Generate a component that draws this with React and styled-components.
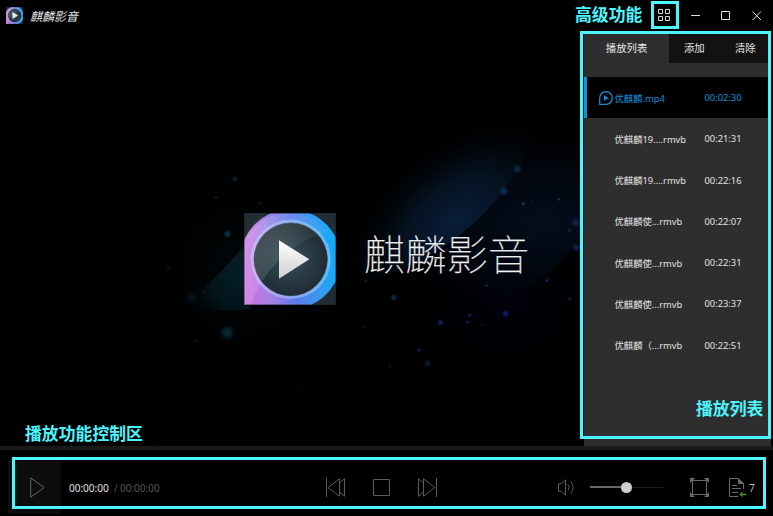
import React from "react";
import styled, { createGlobalStyle } from "styled-components";

const CYAN = "#4df5ff";
const BLUE = "#1790dc";

const GlobalStyle = createGlobalStyle`
  * { box-sizing: border-box; }
  body { margin: 0; background: #000; }
`;

const Window = styled.div`
  position: relative;
  width: 773px;
  height: 516px;
  overflow: hidden;
  display: flex;
  flex-direction: column;
  background: #000;
  color: #e6e6e6;
  font-family: "Noto Sans", "Noto Sans CJK SC", sans-serif;
`;

const TitleBar = styled.header`
  display: flex;
  align-items: center;
  height: 32px;
  flex: none;
  padding: 0 11px 1px 6px;
`;

const AppName = styled.h1`
  margin: 2px auto 0 7px;
  font-size: 12px;
  line-height: 16px;
  font-weight: 400;
  font-style: italic;
`;

const WindowButtons = styled.div`
  display: flex;
  align-items: center;
  gap: 20px;
`;

const IconButton = styled.button`
  display: flex;
  flex: none;
  padding: 0;
  border: 0;
  background: none;
  color: ${(p) => p.$color || "#dcdcdc"};
`;

const Body = styled.main`
  display: flex;
  height: 414px;
  flex: none;
`;

const Stage = styled.section`
  display: grid;
  width: 584px;
  & > * { grid-area: 1 / 1; }
`;

const Brand = styled.div`
  display: flex;
  align-items: flex-start;
  gap: 28px;
  padding: 181px 0 0 244px;
`;

const BrandName = styled.div`
  margin-top: 9px;
  font-family: "Noto Sans CJK SC", sans-serif;
  font-weight: 100;
  font-size: 41.3px;
  line-height: 60px;
  color: #f2f2f2;
  -webkit-text-stroke: 0.25px #d8d8d8;
  white-space: nowrap;
`;

const Sidebar = styled.aside`
  width: 187px;
  background: #2e2e2e;
`;

const Tabs = styled.nav`
  display: flex;
  height: 31px;
  margin-bottom: 14px;
  background: #121212;
`;

const Tab = styled.button`
  width: ${(p) => p.$width}px;
  padding: 1px 0 0;
  border: 0;
  background: ${(p) => (p.$active ? "#2e2e2e" : "transparent")};
  color: #e6e6e6;
  font-family: inherit;
  font-size: 10.4px;
  line-height: 14px;
`;

const Playlist = styled.ul`
  margin: 0;
  padding: 0;
  list-style: none;
`;

const Track = styled.li`
  display: grid;
  grid-template-columns: 16px 90px 1fr;
  align-items: center;
  height: 41.25px;
  padding: 1px 0 0 ${(p) => (p.$active ? 11.5 : 14.5)}px;
  border-left: ${(p) => (p.$active ? `3px solid ${BLUE}` : "0")};
  background: ${(p) => (p.$active ? "#000" : "transparent")};
  color: ${(p) => (p.$active ? BLUE : "#e2e2e2")};
  font-size: 9.33px;
  line-height: 14px;
  white-space: nowrap;
`;

const TrackName = styled.span`
  grid-column: 2;
  padding-top: 1px;
`;

const Divider = styled.div`
  height: 4px;
  flex: none;
  background: #191919;
`;

const Controls = styled.footer`
  display: flex;
  align-items: center;
  height: 66px;
  padding: 9px 0 0 8px;
`;

const PlayButton = styled(IconButton)`
  width: 53px;
  height: 53px;
  align-items: center;
  justify-content: center;
  background: #0d0d0d;
  padding-left: 5px;
  color: #666;
`;

const Time = styled.div`
  display: flex;
  width: 103px;
  margin-left: 8px;
  font-size: 10px;
  line-height: 14px;
  color: #555;
`;

const Elapsed = styled.span`
  width: 45px;
  color: #e2e2e2;
`;

const Slash = styled.span`
  width: 6px;
`;

const Transport = styled.div`
  display: flex;
  gap: 26px;
  margin-left: 153px;
`;

const Volume = styled.div`
  display: flex;
  align-items: center;
  gap: 15px;
  margin-left: 121px;
`;

const Slider = styled.div`
  display: flex;
  align-items: center;
  width: 73px;
  height: 20px;
  margin-top: -1px;
`;

const Rail = styled.div`
  flex: ${(p) => (p.$filled ? "0 0 31px" : "1")};
  height: ${(p) => (p.$filled ? 2 : 1)}px;
  background: ${(p) => (p.$filled ? "#686868" : "#1d1d1d")};
`;

const Knob = styled.div`
  width: 11px;
  height: 11px;
  border-radius: 50%;
  background: #cfcfcf;
`;

const Tools = styled.div`
  display: flex;
  align-items: center;
  gap: 19px;
  margin-left: 27px;
`;

const Count = styled.span`
  margin-left: -17px;
  font-size: 10px;
  line-height: 14px;
  color: #bbb;
`;

const Callout = styled.div`
  position: absolute;
  left: ${(p) => p.$x}px;
  top: ${(p) => p.$y}px;
  width: ${(p) => p.$w}px;
  height: ${(p) => p.$h}px;
  border: 3px solid ${CYAN};
  pointer-events: none;
`;

const CalloutLabel = styled.div`
  position: absolute;
  left: ${(p) => p.$x}px;
  top: ${(p) => p.$y}px;
  font-family: "Noto Sans CJK SC", sans-serif;
  font-size: 16.85px;
  line-height: 20px;
  font-weight: 700;
  color: ${CYAN};
  white-space: nowrap;
`;

const Svg = styled.svg`
  display: block;
  overflow: visible;
`;

const Line = ({ w, h, children, sw = 1 }) => (
  <Svg width={w} height={h} viewBox={`0 0 ${w} ${h}`} fill="none" stroke="currentColor" strokeWidth={sw}>
    {children}
  </Svg>
);

function Logo({ id, size }) {
  return (
    <Svg width={size} height={size} viewBox="0 0 276 278" preserveAspectRatio="none">
      <defs>
        <linearGradient id={`${id}-ring`} x1="0" y1="0.55" x2="1" y2="0.45">
          <stop offset="0" stopColor="#cf72e0" />
          <stop offset="0.25" stopColor="#a381e6" />
          <stop offset="0.5" stopColor="#5c7bea" />
          <stop offset="0.75" stopColor="#389af2" />
          <stop offset="1" stopColor="#08aff9" />
        </linearGradient>
        <radialGradient id={`${id}-disc`}>
          <stop offset="0" stopColor="#344e59" />
          <stop offset="1" stopColor="#202c33" />
        </radialGradient>
        <linearGradient id={`${id}-tri`} x1="0" y1="0" x2="0" y2="1">
          <stop offset="0" stopColor="#fff" />
          <stop offset="1" stopColor="#d0d0d0" />
        </linearGradient>
        <clipPath id={`${id}-clip`}>
          <rect width="276" height="278" />
        </clipPath>
        <linearGradient id={`${id}-shine`} x1="0" y1="0" x2="1" y2="0.4">
          <stop offset="0" stopColor="#fff" stopOpacity="0.24" />
          <stop offset="0.7" stopColor="#fff" stopOpacity="0.06" />
          <stop offset="1" stopColor="#fff" stopOpacity="0.02" />
        </linearGradient>
      </defs>
      <g clipPath={`url(#${id}-clip)`}>
        <rect width="276" height="278" fill="#222d33" />
        <path d="M0 278V82A151 151 0 1 1 140 291H0Z" fill={`url(#${id}-ring)`} />
        <circle cx="140" cy="140" r="120" fill="#b9e2ff" fillOpacity="0.42" />
        <circle cx="140" cy="140" r="110" fill={`url(#${id}-disc)`} stroke="#28363f" strokeWidth="2" />
        <path d="M20 278C50 190 130 90 252 57A151 151 0 0 0 0 82V278Z" fill={`url(#${id}-shine)`} />
        <path d="M105 82V199L196 140Z" fill={`url(#${id}-tri)`} />
        <rect x="1" y="1" width="274" height="276" fill="none" stroke="#1b2023" strokeOpacity="0.5" strokeWidth="3" />
      </g>
    </Svg>
  );
}

// [x, y, radius, colour, opacity] on a 3x grid
const SPARKS = [
  [224, 177, 10, "#124a66", 0.55], [168, 232, 4, "#1b6a8c", 0.8], [299, 249, 8, "#0a2c3a", 0.5],
  [202, 342, 13, "#125a78", 0.65], [95, 533, 20, "#0b3c50", 0.35], [202, 638, 24, "#0d4a68", 0.6],
  [110, 663, 8, "#07202c", 0.6], [25, 445, 8, "#0b1c24", 0.6], [132, 515, 4, "#125a78", 0.4],
  [701, 532, 12, "#124678", 0.7], [1072, 147, 15, "#0e3b60", 0.75], [1031, 214, 15, "#124274", 0.75],
  [1090, 251, 8, "#124a80", 0.75], [1117, 245, 4, "#124a80", 0.5], [1197, 238, 6, "#124a80", 0.7],
  [1247, 307, 16, "#0d3560", 0.75], [1228, 331, 6, "#124a80", 0.6], [1250, 382, 15, "#12408a", 0.65],
  [1104, 350, 4, "#124a80", 0.6], [1160, 482, 7, "#163c90", 0.75], [1164, 474, 4, "#163c90", 0.5],
  [979, 497, 6, "#163c90", 0.75], [1229, 536, 7, "#163c90", 0.7], [1037, 581, 13, "#182f96", 0.7],
  [929, 586, 7, "#182f96", 0.7], [923, 607, 7, "#182f96", 0.75], [841, 608, 12, "#163690", 0.7],
  [967, 615, 4, "#182f96", 0.7], [778, 691, 8, "#122c70", 0.7], [803, 729, 13, "#0c2456", 0.7],
  [690, 738, 7, "#0d2a50", 0.6], [609, 622, 6, "#0d2a50", 0.6], [653, 608, 4, "#182f96", 0.4],
  [617, 484, 6, "#0d3a5c", 0.6], [415, 801, 7, "#061820", 0.7],
];

function Backdrop() {
  return (
    <Svg width="584" height="414" viewBox="0 0 584 414" aria-hidden="true">
      <defs>
        <radialGradient id="beam" gradientUnits="userSpaceOnUse" cx="0" cy="0" r="1" gradientTransform="translate(890 300) rotate(-40) scale(390 235)">
          <stop offset="0" stopColor="#091d3b" />
          <stop offset="0.45" stopColor="#061526" stopOpacity="0.85" />
          <stop offset="0.75" stopColor="#030a12" stopOpacity="0.5" />
          <stop offset="1" stopColor="#000" stopOpacity="0" />
        </radialGradient>
        <radialGradient id="under" gradientUnits="userSpaceOnUse" cx="0" cy="0" r="1" gradientTransform="translate(1150 310) scale(520 300)">
          <stop offset="0" stopColor="#030e1c" />
          <stop offset="0.6" stopColor="#02060f" stopOpacity="0.8" />
          <stop offset="1" stopColor="#000" stopOpacity="0" />
        </radialGradient>
        <radialGradient id="low" gradientUnits="userSpaceOnUse" cx="1040" cy="520" r="370">
          <stop offset="0" stopColor="#01020d" />
          <stop offset="1" stopColor="#000" stopOpacity="0" />
        </radialGradient>
        <radialGradient id="teal" gradientUnits="userSpaceOnUse" cx="255" cy="455" r="190">
          <stop offset="0" stopColor="#052029" />
          <stop offset="0.6" stopColor="#03141a" />
          <stop offset="1" stopColor="#01080b" stopOpacity="0" />
        </radialGradient>
        <radialGradient id="haze" gradientUnits="userSpaceOnUse" cx="250" cy="450" r="420">
          <stop offset="0" stopColor="#010709" />
          <stop offset="1" stopColor="#000" stopOpacity="0" />
        </radialGradient>
        {SPARKS.map(([x, y, , c, o]) => (
          <radialGradient key={`${x}-${y}`} id={`s${x}-${y}`}>
            <stop offset="0" stopColor={c} stopOpacity={o} />
            <stop offset="0.45" stopColor={c} stopOpacity={o * 0.65} />
            <stop offset="1" stopColor={c} stopOpacity="0" />
          </radialGradient>
        ))}
      </defs>
      <g transform="translate(160 88) scale(.33333)">
        <rect x="-200" width="1472" height="900" fill="url(#haze)" />
        <path d="M1140 0C1060 250 860 430 560 505V900H1272V0Z" fill="url(#low)" />
        <path d="M1140 0C1060 250 860 430 560 505L940 610Q1140 510 1272 345V0Z" fill="url(#under)" />
        <path d="M1140 0C1060 250 860 430 560 505L400 300V0Z" fill="url(#beam)" />
        <path d="M60 565Q170 480 270 355V567Q170 578 60 565Z" fill="url(#teal)" />
        {SPARKS.map(([x, y, r]) => (
          <circle key={`${x}-${y}`} cx={x} cy={y} r={r} fill={`url(#s${x}-${y})`} />
        ))}
      </g>
    </Svg>
  );
}

const TRACKS = [
  ["优麒麟.mp4", "00:02:30", true],
  ["优麒麟19….rmvb", "00:21:31"],
  ["优麒麟19….rmvb", "00:22:16"],
  ["优麒麟使…rmvb", "00:22:07"],
  ["优麒麟使…rmvb", "00:22:31"],
  ["优麒麟使…rmvb", "00:23:37"],
  ["优麒麟（…rmvb", "00:22:51"],
];

export default function App() {
  return (
    <Window>
      <GlobalStyle />
      <TitleBar>
        <Logo id="mini" size={17} />
        <AppName>麒麟影音</AppName>
        <WindowButtons>
          <IconButton aria-label="高级功能">
            <Line w={14} h={13}>
              <path d="M.5.5h4v4h-4zM7.5.5h4v4h-4zM.5 7.5h4v4h-4zM7.5 7.5h4v4h-4z" />
            </Line>
          </IconButton>
          <IconButton aria-label="最小化">
            <Line w={10} h={10}><path d="M-1 4.5h9" /></Line>
          </IconButton>
          <IconButton aria-label="最大化">
            <Line w={10} h={10}><path d="M-.5.5h8v8h-8z" /></Line>
          </IconButton>
          <IconButton aria-label="关闭">
            <Line w={10} h={10}><path d="M.5.5l8.5 8.5M9 .5L.5 9" /></Line>
          </IconButton>
        </WindowButtons>
      </TitleBar>

      <Body>
        <Stage>
          <Backdrop />
          <Brand>
            <Logo id="main" size={92} />
            <BrandName>麒麟影音</BrandName>
          </Brand>
        </Stage>
        <Sidebar>
          <Tabs>
            <Tab $width={86} $active>播放列表</Tab>
            <Tab $width={51}>添加</Tab>
            <Tab $width={52}>清除</Tab>
          </Tabs>
          <Playlist>
            {TRACKS.map(([name, time, active], i) => (
              <Track key={i} $active={active}>
                {active && (
                  <Line w={14} h={14} sw={1.2}>
                    <path d="M.7 13.3V7A6.3 6.3 0 1 1 7 13.3Z" />
                    <path d="M5 4.2v5.6L9.6 7Z" fill="currentColor" stroke="none" />
                  </Line>
                )}
                <TrackName>{name}</TrackName>
                <span>{time}</span>
              </Track>
            ))}
          </Playlist>
        </Sidebar>
      </Body>

      <Divider />
      <Controls>
        <PlayButton aria-label="播放">
          <Line w={15} h={21}><path d="M.7.9v19.2L14.2 10.5Z" /></Line>
        </PlayButton>
        <Time>
          <Elapsed>00:00:00</Elapsed>
          <Slash>/</Slash>
          <span>00:00:00</span>
        </Time>
        <Transport>
          <IconButton $color="#5c5c5c" aria-label="上一个">
            <Line w={20} h={19}>
              <path d="M1.5 0v19M14.5.8v17.4L3 9.5ZM14.5 5l5-4.2v17.4l-5-4.2" />
            </Line>
          </IconButton>
          <IconButton $color="#5c5c5c" aria-label="停止">
            <Line w={20} h={19}><path d="M2.5 1.5h16v16h-16z" /></Line>
          </IconButton>
          <IconButton $color="#5c5c5c" aria-label="下一个">
            <Line w={20} h={19}>
              <path d="M19.5 0v19M6.5.8v17.4L17.7 9.5ZM6.5 5l-5-4.2v17.4l5-4.2" />
            </Line>
          </IconButton>
        </Transport>
        <Volume>
          <IconButton $color="#5c5c5c" aria-label="音量">
            <Line w={17} h={17}>
              <path d="M.5 4.7h3L7.5.8v15.4L3.5 12.3h-3ZM10 5.5q2.4 3 0 6M12.8 2.5q4.6 6 0 12" />
            </Line>
          </IconButton>
          <Slider>
            <Rail $filled />
            <Knob />
            <Rail />
          </Slider>
        </Volume>
        <Tools>
          <IconButton $color="#6a6a6a" aria-label="全屏">
            <Line w={19} h={19}>
              <path d="M2.5 2.5h14v14h-14z" />
              <path d="M0 0h5L0 5ZM19 0v5L14 0ZM0 19v-5l5 5ZM19 19h-5l5-5Z" fill="currentColor" stroke="none" />
            </Line>
          </IconButton>
          <IconButton $color="#6a6a6a" aria-label="播放列表">
            <Line w={19} h={19}>
              <path d="M15.5 11V5.5L10.5.5h-9v18h9M4 7.5h5M4 10.5h9M4 14.5h6" />
              <path d="M10 .5v5.5h6Z" fill="currentColor" stroke="none" />
              <path d="M12 16.5h6.5M14.5 14.5l-2.2 2 2.2 2" stroke="#4f8a1c" strokeWidth="1.3" />
            </Line>
          </IconButton>
          <Count>7</Count>
        </Tools>
      </Controls>

      <Callout $x={651} $y={1} $w={28} $h={28} />
      <Callout $x={580} $y={31} $w={191} $h={408} />
      <Callout $x={12} $y={457} $w={754} $h={52} />
      <CalloutLabel $x={575} $y={4}>高级功能</CalloutLabel>
      <CalloutLabel $x={696} $y={398}>播放列表</CalloutLabel>
      <CalloutLabel $x={25} $y={423}>播放功能控制区</CalloutLabel>
    </Window>
  );
}
